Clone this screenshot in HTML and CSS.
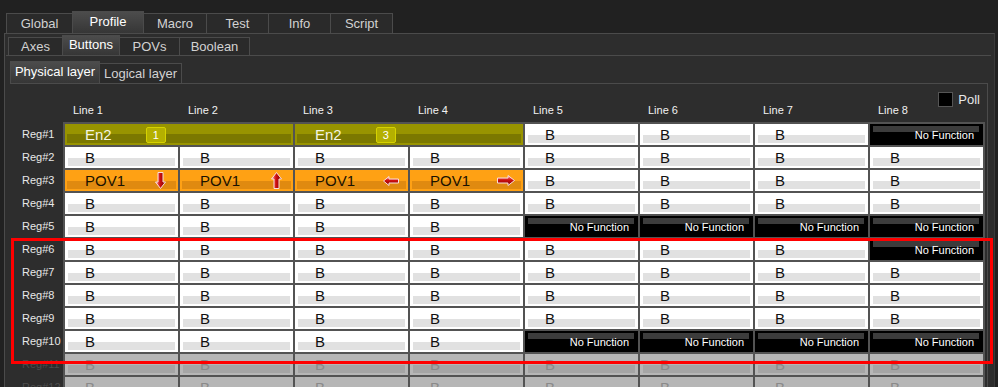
FILE: index.html
```html
<!DOCTYPE html>
<html lang="en">
<head>
    <meta charset="UTF-8">
    <title>Profile - Buttons</title>
    <link rel="stylesheet" href="styles.css">
</head>
<body>
    <svg class="defs" width="0" height="0">
        <defs>
            <linearGradient id="arrowV" x1="0" y1="0" x2="1" y2="0">
                <stop offset="0" stop-color="#ff9c9c"/>
                <stop offset="0.45" stop-color="#d01010"/>
                <stop offset="1" stop-color="#7a0000"/>
            </linearGradient>
            <linearGradient id="arrowH" x1="0" y1="0" x2="0" y2="1">
                <stop offset="0" stop-color="#ff9c9c"/>
                <stop offset="0.45" stop-color="#d01010"/>
                <stop offset="1" stop-color="#7a0000"/>
            </linearGradient>
        </defs>
    </svg>

    <div class="tabs main-tabs">
        <div class="tab w67">Global</div>
        <div class="tab active w72">Profile</div>
        <div class="tab w64">Macro</div>
        <div class="tab w63">Test</div>
        <div class="tab w63">Info</div>
        <div class="tab w63">Script</div>
    </div>

    <div class="panel panel-main">
        <div class="tabs sub-tabs">
            <div class="tab w55">Axes</div>
            <div class="tab active w58">Buttons</div>
            <div class="tab w61">POVs</div>
            <div class="tab w71">Boolean</div>
        </div>

        <div class="panel panel-sub">
            <div class="tabs layer-tabs">
                <div class="tab active w90">Physical layer</div>
                <div class="tab w83">Logical layer</div>
            </div>

            <div class="panel panel-layer">
                <div class="sheet">
                    <div class="labels">
                        <div class="reg">Reg#1</div>
                        <div class="reg">Reg#2</div>
                        <div class="reg">Reg#3</div>
                        <div class="reg">Reg#4</div>
                        <div class="reg">Reg#5</div>
                        <div class="reg">Reg#6</div>
                        <div class="reg">Reg#7</div>
                        <div class="reg">Reg#8</div>
                        <div class="reg">Reg#9</div>
                        <div class="reg">Reg#10</div>
                        <div class="reg off">Reg#11</div>
                        <div class="reg off">Reg#12</div>
                    </div>

                    <div class="table">
                        <div class="cols-head">
                            <div class="col-head">Line 1</div>
                            <div class="col-head">Line 2</div>
                            <div class="col-head">Line 3</div>
                            <div class="col-head">Line 4</div>
                            <div class="col-head">Line 5</div>
                            <div class="col-head">Line 6</div>
                            <div class="col-head">Line 7</div>
                            <div class="col-head">
                                <span>Line 8</span>
                                <label class="poll"><span class="check"></span>Poll</label>
                            </div>
                        </div>

                        <div class="grid">
                            <!-- Reg#1 -->
                            <div class="cell en span2">En2<span class="badge">1</span></div>
                            <div class="cell en span2">En2<span class="badge">3</span></div>
                            <div class="cell">B</div>
                            <div class="cell">B</div>
                            <div class="cell">B</div>
                            <div class="cell nf">No Function</div>
                            <!-- Reg#2 -->
                            <div class="cell">B</div>
                            <div class="cell">B</div>
                            <div class="cell">B</div>
                            <div class="cell">B</div>
                            <div class="cell">B</div>
                            <div class="cell">B</div>
                            <div class="cell">B</div>
                            <div class="cell">B</div>
                            <!-- Reg#3 -->
                            <div class="cell pov">POV1
                                <svg class="arrow down" width="11" height="17" viewBox="0 0 11 17"><polygon points="3,0.5 8,0.5 8,10 10.5,10 5.5,16.5 0.5,10 3,10" fill="url(#arrowV)" stroke="#f6dede" stroke-width="1"/></svg>
                            </div>
                            <div class="cell pov">POV1
                                <svg class="arrow up" width="11" height="17" viewBox="0 0 11 17"><polygon points="3,16.5 8,16.5 8,7 10.5,7 5.5,0.5 0.5,7 3,7" fill="url(#arrowV)" stroke="#f6dede" stroke-width="1"/></svg>
                            </div>
                            <div class="cell pov">POV1
                                <svg class="arrow left" width="16" height="10" viewBox="0 0 16 10"><polygon points="0.5,5 6,0.5 6,3 15.5,3 15.5,7 6,7 6,9.5" fill="url(#arrowH)" stroke="#f6dede" stroke-width="1"/></svg>
                            </div>
                            <div class="cell pov">POV1
                                <svg class="arrow right" width="18" height="11" viewBox="0 0 18 11"><polygon points="17.5,5.5 11,0.5 11,3 0.5,3 0.5,8 11,8 11,10.5" fill="url(#arrowH)" stroke="#f6dede" stroke-width="1"/></svg>
                            </div>
                            <div class="cell">B</div>
                            <div class="cell">B</div>
                            <div class="cell">B</div>
                            <div class="cell">B</div>
                            <!-- Reg#4 -->
                            <div class="cell">B</div>
                            <div class="cell">B</div>
                            <div class="cell">B</div>
                            <div class="cell">B</div>
                            <div class="cell">B</div>
                            <div class="cell">B</div>
                            <div class="cell">B</div>
                            <div class="cell">B</div>
                            <!-- Reg#5 -->
                            <div class="cell">B</div>
                            <div class="cell">B</div>
                            <div class="cell">B</div>
                            <div class="cell">B</div>
                            <div class="cell nf">No Function</div>
                            <div class="cell nf">No Function</div>
                            <div class="cell nf">No Function</div>
                            <div class="cell nf">No Function</div>
                            <!-- Reg#6 -->
                            <div class="cell">B</div>
                            <div class="cell">B</div>
                            <div class="cell">B</div>
                            <div class="cell">B</div>
                            <div class="cell">B</div>
                            <div class="cell">B</div>
                            <div class="cell">B</div>
                            <div class="cell nf">No Function</div>
                            <!-- Reg#7 -->
                            <div class="cell">B</div>
                            <div class="cell">B</div>
                            <div class="cell">B</div>
                            <div class="cell">B</div>
                            <div class="cell">B</div>
                            <div class="cell">B</div>
                            <div class="cell">B</div>
                            <div class="cell">B</div>
                            <!-- Reg#8 -->
                            <div class="cell">B</div>
                            <div class="cell">B</div>
                            <div class="cell">B</div>
                            <div class="cell">B</div>
                            <div class="cell">B</div>
                            <div class="cell">B</div>
                            <div class="cell">B</div>
                            <div class="cell">B</div>
                            <!-- Reg#9 -->
                            <div class="cell">B</div>
                            <div class="cell">B</div>
                            <div class="cell">B</div>
                            <div class="cell">B</div>
                            <div class="cell">B</div>
                            <div class="cell">B</div>
                            <div class="cell">B</div>
                            <div class="cell">B</div>
                            <!-- Reg#10 -->
                            <div class="cell">B</div>
                            <div class="cell">B</div>
                            <div class="cell">B</div>
                            <div class="cell">B</div>
                            <div class="cell nf">No Function</div>
                            <div class="cell nf">No Function</div>
                            <div class="cell nf">No Function</div>
                            <div class="cell nf">No Function</div>
                            <!-- Reg#11 -->
                            <div class="cell off">B</div>
                            <div class="cell off">B</div>
                            <div class="cell off">B</div>
                            <div class="cell off">B</div>
                            <div class="cell off">B</div>
                            <div class="cell off">B</div>
                            <div class="cell off">B</div>
                            <div class="cell off">B</div>
                            <!-- Reg#12 -->
                            <div class="cell off">B</div>
                            <div class="cell off">B</div>
                            <div class="cell off">B</div>
                            <div class="cell off">B</div>
                            <div class="cell off">B</div>
                            <div class="cell off">B</div>
                            <div class="cell off">B</div>
                            <div class="cell off">B</div>
                        </div>
                    </div>
                </div>
            </div>
        </div>
    </div>

    <div class="highlight"></div>
</body>
</html>
```

FILE: styles.css
```css
* {
    box-sizing: border-box;
}

html, body {
    margin: 0;
    height: 387px;
    overflow: hidden;
}

body {
    position: relative;
    background-color: #212121;
    font-family: "Liberation Sans", Arial, sans-serif;
    color: #dcdcdc;
}

.defs {
    position: absolute;
}

/* tab strips */
.tabs {
    display: flex;
    align-items: flex-end;
}

.tab {
    border: 1px solid #4b4b4b;
    border-bottom: none;
    margin-right: -1px;
    background: #2a2a2a;
    color: #d2d2d2;
    text-align: center;
    font-size: 13px;
}

.tab.active {
    background: linear-gradient(#4c4c4c, #363636);
    color: #fff;
    position: relative;
    z-index: 1;
}

.main-tabs {
    height: 33px;
    padding-left: 6px;
}

.main-tabs .tab {
    height: 20px;
    line-height: 20px;
}

.main-tabs .tab.active {
    height: 22px;
    line-height: 19px;
}

.sub-tabs {
    height: 21px;
    padding-left: 3px;
}

.sub-tabs .tab {
    height: 18px;
    line-height: 18px;
}

.sub-tabs .tab.active {
    height: 20px;
    line-height: 17px;
}

.layer-tabs {
    height: 27px;
    padding-left: 4px;
}

.layer-tabs .tab {
    height: 20px;
    line-height: 20px;
}

.layer-tabs .tab.active {
    height: 22px;
    line-height: 19px;
}

.w55 { width: 55px; }
.w58 { width: 58px; }
.w61 { width: 61px; }
.w63 { width: 63px; }
.w64 { width: 64px; }
.w67 { width: 67px; }
.w71 { width: 71px; }
.w72 { width: 72px; }
.w83 { width: 83px; }
.w90 { width: 90px; }

/* panels */
.panel {
    background: #2d2d2d;
    border-top: 1px solid #4b4b4b;
}

.panel-main {
    margin-left: 4px;
    width: 991px;
    height: 354px;
    border-left: 1px solid #4b4b4b;
    border-right: 1px solid #3a3a3a;
}

.panel-sub {
    margin-left: 1px;
    width: 985px;
}

.panel-layer {
    margin-left: 4px;
    width: 978px;
    border-right: 1px solid #4b4b4b;
}

/* button sheet */
.sheet {
    display: flex;
}

.labels {
    width: 53px;
    padding: 40px 0 0 12px;
    display: flex;
    flex-direction: column;
    gap: 2px;
}

.reg {
    height: 21px;
    line-height: 21px;
    font-size: 11px;
    color: #e8e8e8;
}

.reg.off {
    color: #4c4c4c;
}

.table {
    width: 922px;
}

.cols-head {
    display: grid;
    grid-template-columns: repeat(8, 113px);
    column-gap: 2px;
    height: 38px;
    padding: 8px 2px 0;
}

.col-head {
    display: flex;
    justify-content: space-between;
    align-items: flex-end;
    padding: 0 0 6px 8px;
    font-size: 11px;
    line-height: 12px;
    color: #f2f2f2;
}

.poll {
    align-self: flex-start;
    display: flex;
    align-items: center;
    gap: 5px;
    margin-right: 3px;
    font-size: 13px;
    line-height: 15px;
    color: #e8e8e8;
}

.check {
    width: 15px;
    height: 15px;
    background: #000;
    border: 1px solid #555;
}

.grid {
    display: grid;
    grid-template-columns: repeat(8, 113px);
    grid-auto-rows: 21px;
    gap: 2px;
    padding: 2px;
    background: #535353;
}

.cell {
    display: flex;
    align-items: center;
    padding-left: 20px;
    font-size: 15px;
    color: #111;
    background: linear-gradient(#e1e1e1, #e1e1e1) 3px 11px / calc(100% - 6px) 8px no-repeat, #fff;
}

.span2 {
    grid-column: span 2;
}

.cell.en {
    color: #f4f4e4;
    background: linear-gradient(#7b7800, #7b7800) 2px 10px / calc(100% - 4px) 9px no-repeat, #989400;
}

.badge {
    width: 20px;
    height: 16px;
    margin-left: 34px;
    border: 1px solid #d6d200;
    border-radius: 2px;
    background: #b4b000;
    color: #fff;
    font-size: 11px;
    line-height: 14px;
    text-align: center;
}

.cell.pov {
    justify-content: space-between;
    color: #1a1200;
    background: linear-gradient(#e08a10, #e08a10) 2px 11px / calc(100% - 4px) 8px no-repeat, #ffa114;
}

.arrow.down { margin-right: 12px; }
.arrow.up { margin-right: 11px; }
.arrow.left { margin-right: 9px; }
.arrow.right { margin-right: 8px; }

.cell.nf {
    justify-content: flex-end;
    padding: 0 9px 0 0;
    font-size: 11px;
    color: #fff;
    background: linear-gradient(#3c3c3c, #3c3c3c) 3px 2px / calc(100% - 7px) 6px no-repeat, #000;
}

.cell.off {
    color: #8a8a8a;
    background: linear-gradient(#a5a5a5, #a5a5a5) 3px 11px / calc(100% - 6px) 8px no-repeat, #b6b6b6;
}

/* red selection frame drawn over the rows */
.highlight {
    position: absolute;
    left: 11px;
    top: 238px;
    width: 982px;
    height: 126px;
    border: 3px solid #f00;
    pointer-events: none;
}
```
